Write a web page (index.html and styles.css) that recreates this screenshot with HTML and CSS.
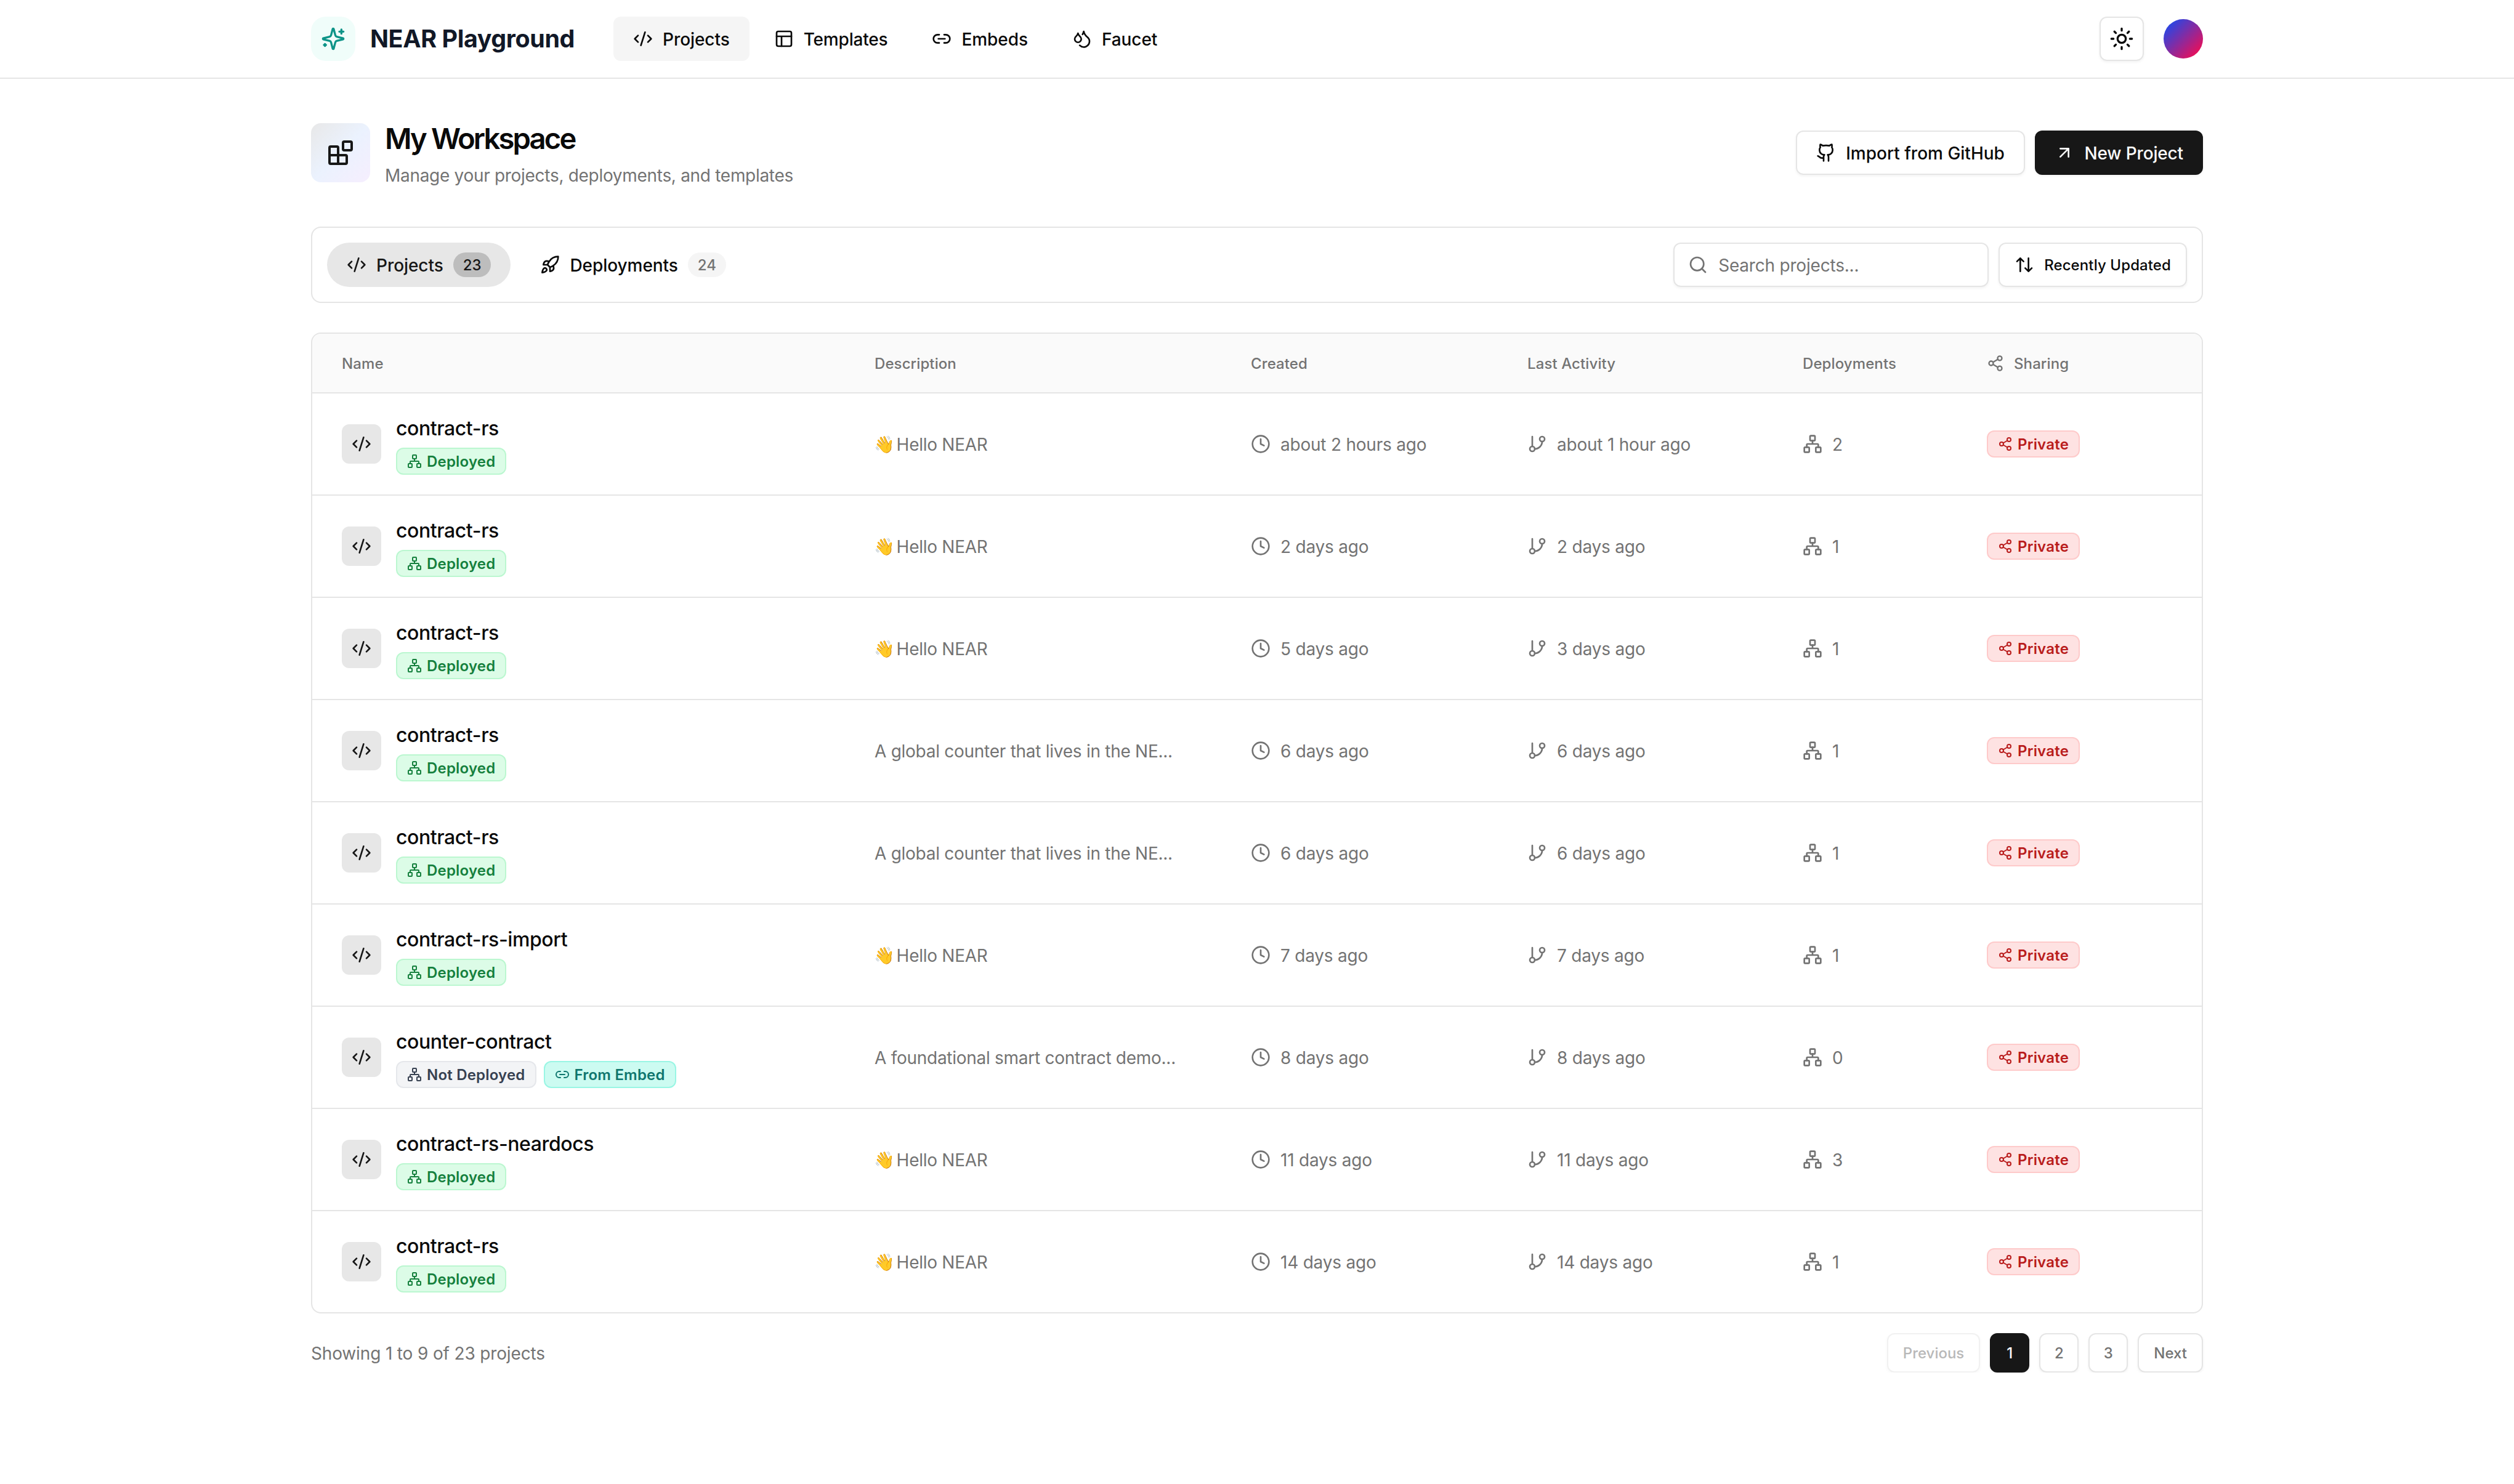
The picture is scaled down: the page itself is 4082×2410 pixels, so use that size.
FILE: index.html
```
<!DOCTYPE html>
<html lang="en">
<head>
<meta charset="utf-8">
<title>NEAR Playground</title>
<link rel="stylesheet" href="styles.css">
</head>
<body>
<svg class="sprite" aria-hidden="true">
  <symbol id="code" viewBox="0 0 24 24"><path d="m18 16 4-4-4-4M6 8l-4 4 4 4M14.5 4l-5 16"/></symbol>
  <symbol id="sparkles" viewBox="0 0 24 24"><path d="M9.937 15.5A2 2 0 0 0 8.5 14.063l-6.135-1.582a.5.5 0 0 1 0-.962L8.5 9.936A2 2 0 0 0 9.937 8.5l1.582-6.135a.5.5 0 0 1 .963 0L14.063 8.5A2 2 0 0 0 15.5 9.937l6.135 1.581a.5.5 0 0 1 0 .964L15.5 14.063a2 2 0 0 0-1.437 1.437l-1.582 6.135a.5.5 0 0 1-.963 0zM20 3v4M22 5h-4M4 17v2M5 18H3"/></symbol>
  <symbol id="panels" viewBox="0 0 24 24"><rect width="18" height="18" x="3" y="3" rx="2"/><path d="M3 9h18M9 21V9"/></symbol>
  <symbol id="link" viewBox="0 0 24 24"><path d="M9 17H7A5 5 0 0 1 7 7h2M15 7h2a5 5 0 1 1 0 10h-2M8 12h8"/></symbol>
  <symbol id="droplets" viewBox="0 0 24 24"><path d="M7 16.3c2.2 0 4-1.83 4-4.05 0-1.16-.57-2.26-1.71-3.19S7.29 6.75 7 5.3c-.29 1.45-1.14 2.84-2.29 3.76S3 11.1 3 12.25c0 2.22 1.8 4.05 4 4.05zM12.56 6.6A10.97 10.97 0 0 0 14 3.02c.5 2.5 2 4.9 4 6.5s3 3.5 3 5.5a6.98 6.98 0 0 1-11.91 4.97"/></symbol>
  <symbol id="sun" viewBox="0 0 24 24"><circle cx="12" cy="12" r="4"/><path d="M12 2v2M12 20v2m-7.07-17.07 1.41 1.41m11.32 11.32 1.41 1.41M2 12h2M20 12h2M6.34 17.66l-1.41 1.41M19.07 4.93l-1.41 1.41"/></symbol>
  <symbol id="blocks" viewBox="0 0 24 24"><rect width="7" height="7" x="14" y="3" rx="1"/><path d="M10 21V8a1 1 0 0 0-1-1H4a1 1 0 0 0-1 1v12a1 1 0 0 0 1 1h12a1 1 0 0 0 1-1v-5a1 1 0 0 0-1-1H3"/></symbol>
  <symbol id="github" viewBox="0 0 24 24"><path d="M15 22v-4a4.8 4.8 0 0 0-1-3.5c3 0 6-2 6-5.5.08-1.25-.27-2.48-1-3.5.28-1.15.28-2.35 0-3.5 0 0-1 0-3 1.5-2.64-.5-5.36-.5-8 0C6 2 5 2 5 2c-.3 1.15-.3 2.35 0 3.5A5.403 5.403 0 0 0 4 9c0 3.5 3 5.5 6 5.5-.39.49-.68 1.05-.85 1.65-.17.6-.22 1.23-.15 1.85v4M9 18c-4.51 2-5-2-7-2"/></symbol>
  <symbol id="arrow" viewBox="0 0 24 24"><path d="M7 7h10v10M7 17 17 7"/></symbol>
  <symbol id="rocket" viewBox="0 0 24 24"><path d="M4.5 16.5c-1.5 1.26-2 5-2 5s3.74-.5 5-2c.71-.84.7-2.13-.09-2.91a2.18 2.18 0 0 0-2.91-.09zM12 15l-3-3a22 22 0 0 1 2-3.95A12.88 12.88 0 0 1 22 2c0 2.72-.78 7.5-6 11a22.35 22.35 0 0 1-4 2zM9 12H4s.55-3.03 2-4c1.62-1.08 5 0 5 0M12 15v5s3.03-.55 4-2c1.08-1.62 0-5 0-5"/></symbol>
  <symbol id="search" viewBox="0 0 24 24"><circle cx="11" cy="11" r="8"/><path d="m21 21-4.3-4.3"/></symbol>
  <symbol id="sort" viewBox="0 0 24 24"><path d="m21 16-4 4-4-4M17 20V4M3 8l4-4 4 4M7 4v16"/></symbol>
  <symbol id="network" viewBox="0 0 24 24"><rect x="16" y="16" width="6" height="6" rx="1"/><rect x="2" y="16" width="6" height="6" rx="1"/><rect x="9" y="2" width="6" height="6" rx="1"/><path d="M5 16v-3a1 1 0 0 1 1-1h12a1 1 0 0 1 1 1v3M12 12V8"/></symbol>
  <symbol id="clock" viewBox="0 0 24 24"><circle cx="12" cy="12" r="10"/><path d="M12 6v6l4 2"/></symbol>
  <symbol id="branch" viewBox="0 0 24 24"><path d="M6 3v12M18 9a9 9 0 0 1-9 9"/><circle cx="18" cy="6" r="3"/><circle cx="6" cy="18" r="3"/></symbol>
  <symbol id="share" viewBox="0 0 24 24"><circle cx="18" cy="5" r="3"/><circle cx="6" cy="12" r="3"/><circle cx="18" cy="19" r="3"/><path d="m8.59 13.51 6.83 3.98M15.41 6.51l-6.82 3.98"/></symbol>
</svg>

<header class="topbar">
  <div class="container topbar-inner">
    <div class="brand">
      <span class="brand-mark"><svg class="icon icon-lg"><use href="#sparkles"/></svg></span>
      <span class="brand-name">NEAR Playground</span>
    </div>
    <nav class="nav">
      <a class="nav-item active"><svg class="icon"><use href="#code"/></svg>Projects</a>
      <a class="nav-item"><svg class="icon"><use href="#panels"/></svg><span class="snug">Templates</span></a>
      <a class="nav-item"><svg class="icon"><use href="#link"/></svg>Embeds</a>
      <a class="nav-item"><svg class="icon"><use href="#droplets"/></svg>Faucet</a>
    </nav>
    <div class="topbar-actions">
      <button class="theme-btn"><svg class="icon icon-lg"><use href="#sun"/></svg></button>
      <span class="avatar"></span>
    </div>
  </div>
</header>

<main class="container main">
  <section class="page-head">
    <span class="page-icon"><svg class="icon icon-xl"><use href="#blocks"/></svg></span>
    <div class="page-title">
      <h1>My Workspace</h1>
      <p>Manage your projects, deployments, and templates</p>
    </div>
    <div class="page-actions">
      <button class="btn"><svg class="icon"><use href="#github"/></svg><span class="wide">Import from GitHub</span></button>
      <button class="btn primary"><svg class="icon"><use href="#arrow"/></svg>New Project</button>
    </div>
  </section>

  <section class="toolbar">
    <div class="tabs">
      <button class="tab active"><svg class="icon"><use href="#code"/></svg>Projects<span class="count">23</span></button>
      <button class="tab"><svg class="icon"><use href="#rocket"/></svg>Deployments<span class="count">24</span></button>
    </div>
    <div class="tools">
      <div class="search"><svg class="icon"><use href="#search"/></svg><span>Search projects...</span></div>
      <button class="sort"><svg class="icon"><use href="#sort"/></svg>Recently Updated</button>
    </div>
  </section>

  <section class="table">
    <div class="row head">
      <div>Name</div><div>Description</div><div>Created</div><div>Last Activity</div><div>Deployments</div>
      <div class="head-share"><svg class="icon icon-md"><use href="#share"/></svg>Sharing</div>
    </div>

    <div class="row">
      <div class="name-cell"><span class="file"><svg class="icon"><use href="#code"/></svg></span><div class="name"><strong>contract-rs</strong><div class="badges"><span class="badge green"><svg class="icon icon-sm"><use href="#network"/></svg>Deployed</span></div></div></div>
      <div class="desc"><span class="emoji">👋</span> Hello NEAR</div>
      <div class="meta"><svg class="icon"><use href="#clock"/></svg>about 2 hours ago</div>
      <div class="meta"><svg class="icon"><use href="#branch"/></svg>about 1 hour ago</div>
      <div class="meta"><svg class="icon"><use href="#network"/></svg>2</div>
      <div><span class="badge red"><svg class="icon icon-sm"><use href="#share"/></svg>Private</span></div>
    </div>

    <div class="row">
      <div class="name-cell"><span class="file"><svg class="icon"><use href="#code"/></svg></span><div class="name"><strong>contract-rs</strong><div class="badges"><span class="badge green"><svg class="icon icon-sm"><use href="#network"/></svg>Deployed</span></div></div></div>
      <div class="desc"><span class="emoji">👋</span> Hello NEAR</div>
      <div class="meta"><svg class="icon"><use href="#clock"/></svg>2 days ago</div>
      <div class="meta"><svg class="icon"><use href="#branch"/></svg>2 days ago</div>
      <div class="meta"><svg class="icon"><use href="#network"/></svg>1</div>
      <div><span class="badge red"><svg class="icon icon-sm"><use href="#share"/></svg>Private</span></div>
    </div>

    <div class="row">
      <div class="name-cell"><span class="file"><svg class="icon"><use href="#code"/></svg></span><div class="name"><strong>contract-rs</strong><div class="badges"><span class="badge green"><svg class="icon icon-sm"><use href="#network"/></svg>Deployed</span></div></div></div>
      <div class="desc"><span class="emoji">👋</span> Hello NEAR</div>
      <div class="meta"><svg class="icon"><use href="#clock"/></svg>5 days ago</div>
      <div class="meta"><svg class="icon"><use href="#branch"/></svg>3 days ago</div>
      <div class="meta"><svg class="icon"><use href="#network"/></svg>1</div>
      <div><span class="badge red"><svg class="icon icon-sm"><use href="#share"/></svg>Private</span></div>
    </div>

    <div class="row">
      <div class="name-cell"><span class="file"><svg class="icon"><use href="#code"/></svg></span><div class="name"><strong>contract-rs</strong><div class="badges"><span class="badge green"><svg class="icon icon-sm"><use href="#network"/></svg>Deployed</span></div></div></div>
      <div class="desc">A global counter that lives in the NE...</div>
      <div class="meta"><svg class="icon"><use href="#clock"/></svg>6 days ago</div>
      <div class="meta"><svg class="icon"><use href="#branch"/></svg>6 days ago</div>
      <div class="meta"><svg class="icon"><use href="#network"/></svg>1</div>
      <div><span class="badge red"><svg class="icon icon-sm"><use href="#share"/></svg>Private</span></div>
    </div>

    <div class="row">
      <div class="name-cell"><span class="file"><svg class="icon"><use href="#code"/></svg></span><div class="name"><strong>contract-rs</strong><div class="badges"><span class="badge green"><svg class="icon icon-sm"><use href="#network"/></svg>Deployed</span></div></div></div>
      <div class="desc">A global counter that lives in the NE...</div>
      <div class="meta"><svg class="icon"><use href="#clock"/></svg>6 days ago</div>
      <div class="meta"><svg class="icon"><use href="#branch"/></svg>6 days ago</div>
      <div class="meta"><svg class="icon"><use href="#network"/></svg>1</div>
      <div><span class="badge red"><svg class="icon icon-sm"><use href="#share"/></svg>Private</span></div>
    </div>

    <div class="row">
      <div class="name-cell"><span class="file"><svg class="icon"><use href="#code"/></svg></span><div class="name"><strong>contract-rs-import</strong><div class="badges"><span class="badge green"><svg class="icon icon-sm"><use href="#network"/></svg>Deployed</span></div></div></div>
      <div class="desc"><span class="emoji">👋</span> Hello NEAR</div>
      <div class="meta"><svg class="icon"><use href="#clock"/></svg>7 days ago</div>
      <div class="meta"><svg class="icon"><use href="#branch"/></svg>7 days ago</div>
      <div class="meta"><svg class="icon"><use href="#network"/></svg>1</div>
      <div><span class="badge red"><svg class="icon icon-sm"><use href="#share"/></svg>Private</span></div>
    </div>

    <div class="row">
      <div class="name-cell"><span class="file"><svg class="icon"><use href="#code"/></svg></span><div class="name"><strong>counter-contract</strong><div class="badges"><span class="badge gray"><svg class="icon icon-sm"><use href="#network"/></svg>Not Deployed</span><span class="badge teal"><svg class="icon icon-sm"><use href="#link"/></svg>From Embed</span></div></div></div>
      <div class="desc">A foundational smart contract demo...</div>
      <div class="meta"><svg class="icon"><use href="#clock"/></svg>8 days ago</div>
      <div class="meta"><svg class="icon"><use href="#branch"/></svg>8 days ago</div>
      <div class="meta"><svg class="icon"><use href="#network"/></svg>0</div>
      <div><span class="badge red"><svg class="icon icon-sm"><use href="#share"/></svg>Private</span></div>
    </div>

    <div class="row">
      <div class="name-cell"><span class="file"><svg class="icon"><use href="#code"/></svg></span><div class="name"><strong>contract-rs-neardocs</strong><div class="badges"><span class="badge green"><svg class="icon icon-sm"><use href="#network"/></svg>Deployed</span></div></div></div>
      <div class="desc"><span class="emoji">👋</span> Hello NEAR</div>
      <div class="meta"><svg class="icon"><use href="#clock"/></svg>11 days ago</div>
      <div class="meta"><svg class="icon"><use href="#branch"/></svg>11 days ago</div>
      <div class="meta"><svg class="icon"><use href="#network"/></svg>3</div>
      <div><span class="badge red"><svg class="icon icon-sm"><use href="#share"/></svg>Private</span></div>
    </div>

    <div class="row">
      <div class="name-cell"><span class="file"><svg class="icon"><use href="#code"/></svg></span><div class="name"><strong>contract-rs</strong><div class="badges"><span class="badge green"><svg class="icon icon-sm"><use href="#network"/></svg>Deployed</span></div></div></div>
      <div class="desc"><span class="emoji">👋</span> Hello NEAR</div>
      <div class="meta"><svg class="icon"><use href="#clock"/></svg>14 days ago</div>
      <div class="meta"><svg class="icon"><use href="#branch"/></svg>14 days ago</div>
      <div class="meta"><svg class="icon"><use href="#network"/></svg>1</div>
      <div><span class="badge red"><svg class="icon icon-sm"><use href="#share"/></svg>Private</span></div>
    </div>
  </section>

  <footer class="pager">
    <span class="summary">Showing 1 to 9 of 23 projects</span>
    <div class="pages">
      <button class="page disabled">Previous</button>
      <button class="page num current">1</button>
      <button class="page num">2</button>
      <button class="page num">3</button>
      <button class="page">Next</button>
    </div>
  </footer>
</main>
</body>
</html>
```
FILE: styles.css
```
:root {
  --border: #e5e5e5;
  --ink: #0a0a0a;
  --primary: #171717;
  --muted: #737373;
  --shadow: 0 2px 4px rgba(0, 0, 0, .05);
}

* { box-sizing: border-box; margin: 0; }

body {
  background: #fff;
  color: var(--ink);
  font: 400 28px/40px Inter, "Liberation Sans", sans-serif;
  letter-spacing: -.27px;
}

button {
  font: inherit;
  letter-spacing: inherit;
  color: inherit;
  background: none;
  border: 0;
  padding: 0;
}

.sprite { display: none; }

.icon {
  width: 32px;
  height: 32px;
  flex: none;
  fill: none;
  stroke: currentColor;
  stroke-width: 2;
  stroke-linecap: round;
  stroke-linejoin: round;
}
.icon-sm { width: 24px; height: 24px; }
.icon-md { width: 28px; height: 28px; }
.icon-lg { width: 40px; height: 40px; }
.icon-xl { width: 48px; height: 48px; }

/* Labels beside an icon sit one pixel below the optical centre */
.nav-item, .btn, .tab, .search, .sort, .meta, .head-share { padding-top: 2px; }
.nav-item > .icon, .btn > .icon, .tab > .icon, .search > .icon, .sort > .icon,
.meta > .icon, .head-share > .icon, .tab > .count { margin-top: -2px; }

.container { width: 3072px; margin: 0 auto; }

/* Top bar */
.topbar { height: 128px; border-bottom: 2px solid var(--border); }
.topbar-inner { height: 100%; display: flex; align-items: center; }
.brand { display: flex; align-items: center; gap: 24px; width: 491px; }
.brand-mark {
  width: 72px;
  height: 72px;
  border-radius: 24px;
  display: grid;
  place-items: center;
  background: #f0fdfa;
  color: #0d9488;
}
.brand-name { font-size: 39.4px; font-weight: 700; letter-spacing: -.4px; color: #111827; white-space: nowrap; }
.nav { display: flex; gap: 8px; }
.nav-item {
  height: 72px;
  padding-inline: 32px;
  border-radius: 12px;
  display: flex;
  align-items: center;
  gap: 16px;
  font-weight: 500;
  letter-spacing: -.06px;
}
.nav-item.active { background: #f5f5f5; }
.snug { letter-spacing: -.2px; }
.wide { letter-spacing: 0; }
.topbar-actions { display: flex; align-items: center; gap: 32px; margin-left: auto; }
.theme-btn {
  width: 72px;
  height: 72px;
  display: grid;
  place-items: center;
  border: 2px solid var(--border);
  border-radius: 12px;
  box-shadow: var(--shadow);
}
.avatar {
  width: 64px;
  height: 64px;
  border-radius: 50%;
  background: linear-gradient(135deg, #2b45e2 14%, #e5105c 86%);
}

/* Page heading */
.main { padding-top: 64px; }
.page-head { display: flex; align-items: center; height: 112px; gap: 24px; }
.page-icon {
  width: 96px;
  height: 96px;
  border-radius: 16px;
  display: grid;
  place-items: center;
  color: var(--primary);
  background: linear-gradient(to bottom right, #e8e8e8, #ebf2fe, #f6eefe);
}
.page-title { display: flex; flex-direction: column; gap: 8px; padding-top: 2px; }
h1 { font-size: 47.2px; line-height: 64px; font-weight: 600; letter-spacing: -2.85px; }
.page-title p { color: var(--muted); letter-spacing: -.3px; }
.page-actions { display: flex; gap: 16px; margin-left: auto; }
.btn {
  height: 72px;
  padding-inline: 32px;
  display: flex;
  align-items: center;
  gap: 16px;
  border: 2px solid var(--border);
  border-radius: 12px;
  box-shadow: var(--shadow);
  font-weight: 500;
  letter-spacing: -.15px;
}
.btn:not(.primary) { padding-inline: 31.5px; }
.btn.primary { border: 0; background: var(--primary); color: #fafafa; }

/* Tabs, search and sorting */
.toolbar {
  margin-top: 64px;
  height: 124px;
  padding: 24px;
  border: 2px solid var(--border);
  border-radius: 16px;
  display: flex;
  justify-content: space-between;
}
.tabs, .tools { display: flex; gap: 16px; }
.tab {
  height: 72px;
  padding-inline: 32px;
  border-radius: 36px;
  display: flex;
  align-items: center;
  gap: 16px;
  font-weight: 500;
  letter-spacing: -.06px;
}
.tab.active { background: #e7e7e7; color: var(--primary); }
.count {
  height: 40px;
  padding: 0 16px;
  border-radius: 20px;
  font-size: 24px;
  line-height: 41px;
  background: #f5f5f5;
  color: var(--muted);
}
.tab.active .count { background: #bdbdbd; color: var(--primary); }
.search {
  width: 512px;
  height: 72px;
  padding-left: 22px;
  display: flex;
  align-items: center;
  gap: 17px;
  border: 2px solid var(--border);
  border-radius: 12px;
  box-shadow: var(--shadow);
  color: var(--muted);
  letter-spacing: -.2px;
}
.sort {
  height: 72px;
  padding-inline: 24px;
  display: flex;
  align-items: center;
  gap: 16px;
  border: 2px solid var(--border);
  border-radius: 12px;
  box-shadow: var(--shadow);
  font-size: 24px;
  font-weight: 500;
  letter-spacing: .1px;
}

/* Projects table */
.table {
  margin-top: 48px;
  border: 2px solid var(--border);
  border-radius: 16px;
  overflow: hidden;
}
.row {
  display: grid;
  grid-template-columns: 865px 611px 449px 447px 299px 397px;
  align-items: center;
  height: 166px;
  border-bottom: 2px solid var(--border);
}
.row:last-child { height: 164px; border-bottom: 0; }
.row > div { padding-left: 48px; }
.row.head {
  height: 97px;
  background: #fafafa;
  color: var(--muted);
  font-size: 24px;
  font-weight: 500;
  letter-spacing: .1px;
}
.row.head > div { padding-top: 2px; }
.head-share { display: flex; align-items: center; gap: 16px; }
.name-cell { display: flex; align-items: center; gap: 24px; }
.file {
  width: 64px;
  height: 64px;
  border-radius: 12px;
  display: grid;
  place-items: center;
  background: #e7e7e7;
  color: var(--primary);
}
.name { display: flex; flex-direction: column; gap: 8px; }
.name strong { height: 48px; font-size: 32px; line-height: 50px; font-weight: 500; letter-spacing: -.42px; }
.badges { display: flex; gap: 12px; }
.badge {
  display: inline-flex;
  align-items: center;
  gap: 8px;
  height: 44px;
  padding: 1px 16px 0;
  border: 2px solid;
  border-radius: 12px;
  font-size: 24px;
  font-weight: 600;
  letter-spacing: .2px;
  vertical-align: middle;
}
.badge > .icon { margin-top: -1px; }
.green { background: #dcfce7; border-color: #bbf7d0; color: #15803d; }
.gray { background: #f3f4f6; border-color: #e5e7eb; color: #374151; }
.teal { background: #ccfbf1; border-color: #99f6e4; color: #0f766e; }
.red { background: #fee2e2; border-color: #fecaca; color: #b91c1c; }
.desc, .meta { color: var(--muted); }
.desc { white-space: nowrap; padding-top: 2px; }
.emoji { display: inline-block; width: 28px; font-size: 27px; line-height: 1; letter-spacing: 0; margin: 0 1px 0 -1px; vertical-align: 1px; }
.meta { display: flex; align-items: center; gap: 16px; letter-spacing: -.22px; }

/* Pagination */
.pager {
  margin-top: 32px;
  display: flex;
  align-items: center;
  justify-content: space-between;
  color: var(--muted);
}
.summary { padding-top: 2px; letter-spacing: -.15px; }
.pages { display: flex; gap: 16px; }
.page {
  height: 64px;
  padding: 1px 24px 0;
  border: 2px solid var(--border);
  border-radius: 12px;
  box-shadow: var(--shadow);
  font-size: 24px;
  font-weight: 500;
  letter-spacing: 0;
}
.page.num { width: 64px; padding-inline: 0; }
.page.current { border-color: var(--primary); background: var(--primary); color: #fafafa; }
.page.disabled { opacity: .5; }
```
